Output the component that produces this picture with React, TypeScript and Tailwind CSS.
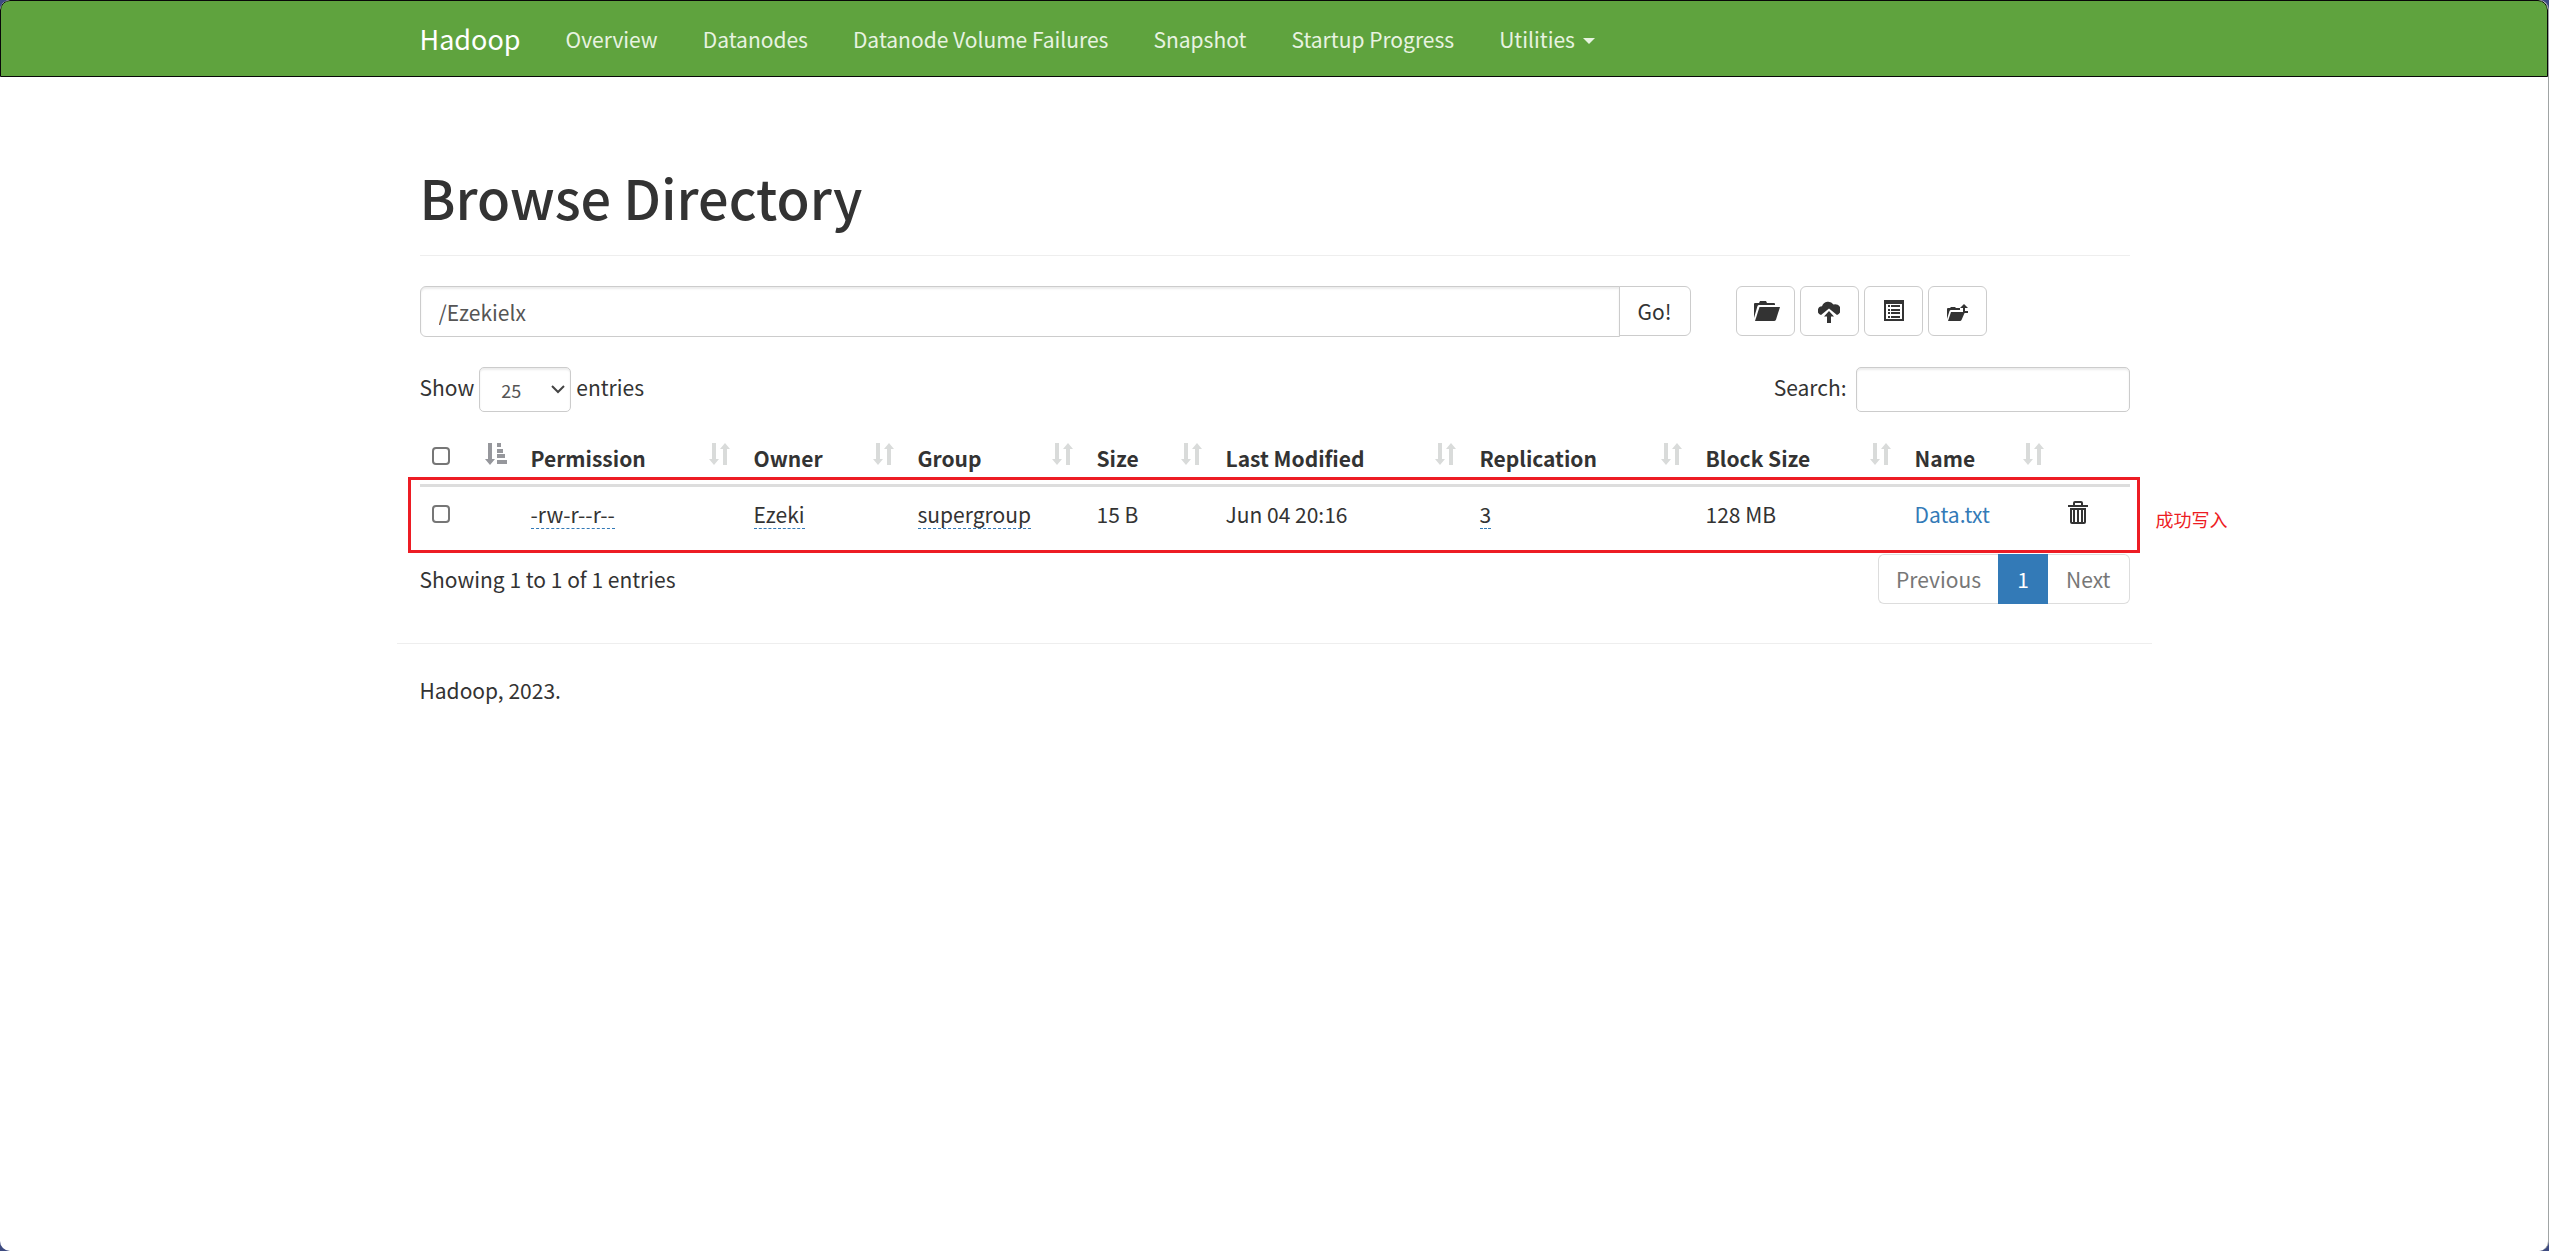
import type { ReactNode } from "react";

const navLinks = ["Overview", "Datanodes", "Datanode Volume Failures", "Snapshot", "Startup Progress"];

const columns = [
    { label: "Permission", width: "w-[223px]" },
    { label: "Owner", width: "w-[164px]" },
    { label: "Group", width: "w-[179px]" },
    { label: "Size", width: "w-[129px]" },
    { label: "Last Modified", width: "w-[254px]" },
    { label: "Replication", width: "w-[226px]" },
    { label: "Block Size", width: "w-[209px]" },
    { label: "Name", width: "w-[153px]" },
];

const checkboxClass = "block size-[18px] appearance-none rounded-[4px] border-2 border-[#767676] bg-white";
const inputShadow = "shadow-[inset_0_2px_2px_rgba(0,0,0,0.075)]";

function SortIcon() {
    return (
        <svg viewBox="0 0 21 22" className="h-[22px] w-[21px] text-[#d9dbda]" fill="currentColor" aria-hidden="true">
            <path d="M3 0h4v16h3l-5 6-5-6h3z" />
            <path d="M14 22h4V6h3l-5-6-5 6h3z" />
        </svg>
    );
}

function SortAscIcon() {
    return (
        <svg viewBox="0 0 22 22" className="h-[22px] w-[22px] text-[#96979c]" fill="currentColor" aria-hidden="true">
            <path d="M3 0h4v16h3l-5 6-5-6h3z" />
            <path d="M12 0h4v4h-4zM12 6h6v4h-6zM12 11h8v4h-8zM12 17h10v4H12z" />
        </svg>
    );
}

function FolderOpenIcon() {
    return (
        <svg viewBox="-4 0 30 20" className="h-5 w-[30px]" fill="currentColor" aria-hidden="true">
            <path d="M0 17V3q0-1 1-1h4l1-2h6l1 2h7q1 0 1 1v1H5Q4 4 3.5 5z" />
            <path d="M5.500 6H26l-4 12.500q-.5 1.500-2 1.500H1z" />
        </svg>
    );
}

function CloudUploadIcon() {
    return (
        <svg viewBox="0 -1 22 23" className="h-[23px] w-[22px]" fill="currentColor" aria-hidden="true">
            <path d="M3 14A4.500 4.500 0 0 1 4 5.200 6.500 6.500 0 0 1 15.500 3.500 5.200 5.200 0 0 1 19 14L11 7.500z" />
            <path d="M11 10l5 5.500h-3V22H9v-6.500H6z" />
        </svg>
    );
}

function ListAltIcon() {
    return (
        <svg viewBox="-2 0 22 22" className="size-[22px]" fill="currentColor" aria-hidden="true">
            <path fillRule="evenodd" d="M0 0h20v21H0zM2 4v15h16V4z" />
            <path d="M4 5h2v2H4zM4 9h2v2H4zM4 12h2v2H4zM4 16h2v2H4zM7 5h9v2H7zM7 9h9v2H7zM7 12h9v2H7zM7 16h9v2H7z" />
        </svg>
    );
}

function FolderParentIcon() {
    return (
        <svg viewBox="0 -3 21 20" className="h-5 w-[21px]" fill="currentColor" aria-hidden="true">
            <path d="M0 15V5q0-1 1-1h2l1-1h4l1 1h4v2H4Q3 6 2.500 7z" />
            <path d="M4 8h14l-3.500 8q-.4 1-1.500 1H1z" />
            <path d="M17 0l4 4h-3v3h3v2h-5V4h-3z" />
        </svg>
    );
}

function TrashIcon() {
    return (
        <svg viewBox="0 0 20 23" className="h-[23px] w-5" fill="currentColor" aria-hidden="true">
            <path fillRule="evenodd" d="M5 4V2Q5 0 7 0h6q2 0 2 2v2h5v2H0V4zM7 2v2h6V2z" />
            <path fillRule="evenodd" d="M2 7h16v14q0 2-2 2H4q-2 0-2-2zM4 9v12h1V9zM7 9v12h2V9zM11 9v12h2V9zM15 9v12h1V9z" />
        </svg>
    );
}

function IconButton({ label, children }: { label: string; children: ReactNode }) {
    return (
        <button
            type="button"
            aria-label={label}
            className="flex h-[50px] w-[59px] items-center justify-center rounded-md border border-[#ccc] bg-white"
        >
            {children}
        </button>
    );
}

function Editable({ children }: { children: ReactNode }) {
    return <span className="inline-block border-b border-dashed border-[#337ab7] leading-7">{children}</span>;
}

export default function App() {
    return (
        <div className="min-h-screen bg-[#3d4a80] font-['Noto_Sans_CJK_SC',sans-serif] text-[21px] leading-[30px] text-[#333]">
            <div className="min-h-screen overflow-hidden rounded-[10px] border-r border-[#a0a4a4] bg-white">
                {/* Navbar */}
                <header className="rounded-t-[10px] border border-[#080808] bg-[#5fa33e]">
                    <nav className="mx-auto flex h-[75px] max-w-[1755px] items-center gap-[45px] px-[23px] pt-px text-[#e8f3e1]">
                        <a href="#" className="text-[27px] text-white">Hadoop</a>
                        {navLinks.map(link => (
                            <a key={link} href="#">{link}</a>
                        ))}
                        <button type="button" className="flex items-center gap-2">
                            Utilities
                            <span className="mt-[3px] border-x-[6px] border-t-[6px] border-x-transparent border-t-current" />
                        </button>
                    </nav>
                </header>

                <main className="mx-auto max-w-[1755px] pt-[88px] pr-[22px] pl-[23px]">
                    <h1 className="border-b border-[#eee] pb-[26px] text-[54px] leading-[64px] font-medium">Browse Directory</h1>

                    {/* Path bar */}
                    <div className="mt-[30px] flex items-start">
                        <form className="flex flex-1 items-start" onSubmit={e => e.preventDefault()}>
                            <input
                                type="text"
                                aria-label="Directory path"
                                defaultValue="/Ezekielx"
                                className={`h-[51px] min-w-0 flex-1 rounded-l-md border border-[#ccc] px-[18px] text-[#555] ${inputShadow}`}
                            />
                            <button type="submit" className="-ml-px h-[50px] rounded-r-md border border-[#ccc] px-[18px]">Go!</button>
                        </form>
                        <div className="ml-[45px] flex w-[394px] gap-[5px]">
                            <IconButton label="Create directory"><FolderOpenIcon /></IconButton>
                            <IconButton label="Upload files"><CloudUploadIcon /></IconButton>
                            <IconButton label="Cut and paste"><ListAltIcon /></IconButton>
                            <IconButton label="Parent directory"><FolderParentIcon /></IconButton>
                        </div>
                    </div>

                    {/* Table controls */}
                    <div className="mt-[30px] flex justify-between">
                        <label className="flex items-start gap-[5px]">
                            <span className="pt-[5px]">Show</span>
                            <span className="relative">
                                <select
                                    defaultValue="25"
                                    className={`h-[45px] w-[92px] appearance-none rounded-[5px] border border-[#ccc] pl-[21px] text-[18px] text-[#555] ${inputShadow}`}
                                >
                                    <option>25</option>
                                    <option>50</option>
                                    <option>100</option>
                                </select>
                                <svg viewBox="0 0 14 9" className="pointer-events-none absolute top-[18px] right-[6px] h-[9px] w-[14px]" fill="none" stroke="#444" strokeWidth="2" aria-hidden="true">
                                    <path d="M1 1l6 6 6-6" />
                                </svg>
                            </span>
                            <span className="pt-[5px]">entries</span>
                        </label>
                        <label className="flex items-start gap-[9px]">
                            <span className="pt-[5px]">Search:</span>
                            <input type="search" className={`h-[45px] w-[274px] rounded-[5px] border border-[#ccc] px-[15px] ${inputShadow}`} />
                        </label>
                    </div>

                    {/* Listing */}
                    <div className="relative mt-[19px]">
                        <table className="w-full table-fixed text-left">
                            <thead>
                                <tr className="border-b-[3px] border-[#ddd] align-top">
                                    <th className="w-[99px] px-3 pt-3">
                                        <div className="flex items-start justify-between">
                                            <input type="checkbox" aria-label="Select all" className={`mt-1 ${checkboxClass}`} />
                                            <SortAscIcon />
                                        </div>
                                    </th>
                                    {columns.map(col => (
                                        <th key={col.label} className={`px-3 pt-3 pb-[11px] ${col.width}`}>
                                            <div className="flex items-start justify-between">
                                                {col.label}
                                                <SortIcon />
                                            </div>
                                        </th>
                                    ))}
                                    <th className="w-[74px]" />
                                </tr>
                            </thead>
                            <tbody>
                                <tr className="align-top">
                                    <td className="px-3 pt-[18px]">
                                        <input type="checkbox" aria-label="Select Data.txt" className={checkboxClass} />
                                    </td>
                                    <td className="px-3 pt-3"><Editable>-rw-r--r--</Editable></td>
                                    <td className="px-3 pt-3"><Editable>Ezeki</Editable></td>
                                    <td className="px-3 pt-3"><Editable>supergroup</Editable></td>
                                    <td className="px-3 pt-3">15 B</td>
                                    <td className="px-3 pt-3">Jun 04 20:16</td>
                                    <td className="px-3 pt-3"><Editable>3</Editable></td>
                                    <td className="px-3 pt-3">128 MB</td>
                                    <td className="px-3 pt-3"><a href="#" className="text-[#337ab7]">Data.txt</a></td>
                                    <td className="px-3 pt-[14px] pb-[29px]">
                                        <button type="button" aria-label="Delete Data.txt" className="block"><TrashIcon /></button>
                                    </td>
                                </tr>
                            </tbody>
                        </table>
                        {/* Highlight frame and its note */}
                        <div className="pointer-events-none absolute -right-[10px] bottom-0 -left-3 h-[76px] border-[3px] border-[#ed1c24]">
                            <span className="absolute top-[24px] left-full ml-[19px] text-[18px] leading-[30px] whitespace-nowrap text-[#ed1c24]">成功写入</span>
                        </div>
                    </div>

                    {/* Pagination */}
                    <div className="mt-px flex items-start justify-between">
                        <p className="pt-[10px]">Showing 1 to 1 of 1 entries</p>
                        <div className="flex h-[50px] text-[#777]">
                            <button type="button" className="rounded-l-md border border-r-0 border-[#ddd] px-[17px]">Previous</button>
                            <button type="button" className="w-[50px] bg-[#337ab7] text-white">1</button>
                            <button type="button" className="rounded-r-md border border-l-0 border-[#ddd] px-[18px]">Next</button>
                        </div>
                    </div>
                </main>

                <footer className="mx-auto mt-[39px] max-w-[1755px] border-t border-[#eee] px-[23px] pt-[31px]">
                    <p>Hadoop, 2023.</p>
                </footer>
            </div>
        </div>
    );
}
